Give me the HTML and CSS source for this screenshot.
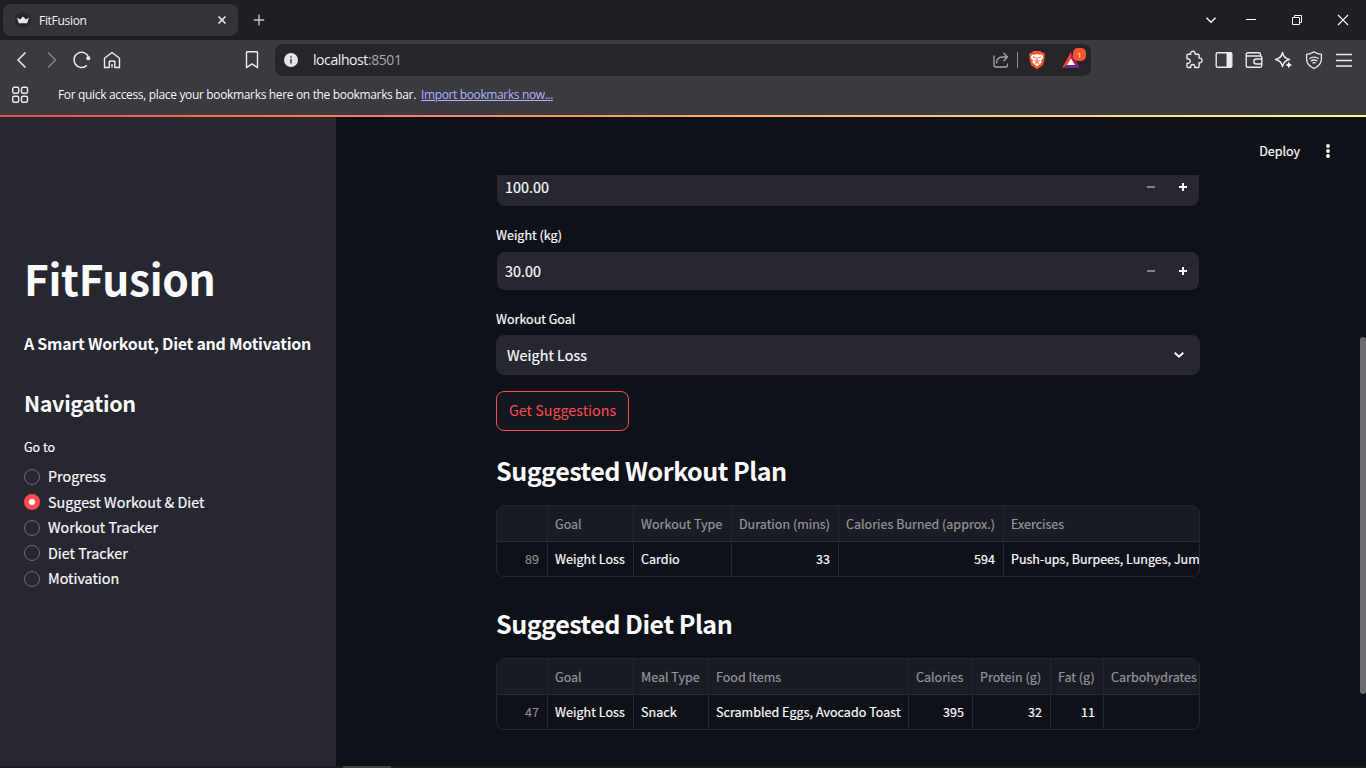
FILE: index.html
```html
<!DOCTYPE html>
<html lang="en">
<head>
<meta charset="utf-8">
<title>FitFusion</title>
<link rel="stylesheet" href="styles.css">
</head>
<body>
<div class="window">
  <div class="tabstrip">
    <div class="tab">
      <svg class="favicon" width="16" height="16" viewBox="0 0 16 16"><circle cx="8" cy="8" r="8" fill="#262730"/><path d="M2 5.500 5 7.400 8 4.500l3 2.900 3-1.900-1.800 5.700H3.800z" fill="#e8e8ea"/></svg>
      <span class="tab-title">FitFusion</span>
      <svg width="10" height="10" viewBox="0 0 10 10"><path d="M1.5 1.5l7 7m0-7l-7 7" stroke="#e4e4e6" stroke-width="1.7"/></svg>
    </div>
    <svg class="new-tab" width="12" height="12" viewBox="0 0 12 12"><path d="M6 .8v10.4M.8 6h10.4" stroke="#c4c4c8" stroke-width="1.4"/></svg>
    <div class="win-controls">
      <svg width="12" height="12" viewBox="0 0 12 12"><path d="M1.5 3.8 6 8.2l4.500-4.400" fill="none" stroke="#f0f0f2" stroke-width="1.6"/></svg>
      <svg width="12" height="12" viewBox="0 0 12 12"><path d="M1 5.500h10" stroke="#fff"/></svg>
      <svg width="12" height="12" viewBox="0 0 12 12"><path d="M1.500 3.500h7v7h-7zM3.500 3.500v-2h7v7h-2" fill="none" stroke="#fff"/></svg>
      <svg width="12" height="12" viewBox="0 0 12 12"><path d="M1 1l10 10M11 1 1 11" stroke="#fff" stroke-width="1.100"/></svg>
    </div>
  </div>

  <div class="toolbar">
    <div class="nav-icons">
      <svg width="20" height="20" viewBox="0 0 20 20"><path d="M13.500 2.500 6 10l7.500 7.500" fill="none" stroke="#ececee" stroke-width="1.500"/></svg>
      <svg width="20" height="20" viewBox="0 0 20 20"><path d="M6 2.500 13.500 10 6 17.500" fill="none" stroke="#828286" stroke-width="1.500"/></svg>
      <svg width="20" height="20" viewBox="0 0 20 20"><path d="M14.800 15.400A7.600 7.600 0 1 1 16.800 7.500" fill="none" stroke="#ececee" stroke-width="1.500"/><circle cx="16.300" cy="8.200" r="2" fill="#ececee"/></svg>
      <svg width="20" height="20" viewBox="0 0 20 20"><path d="M2.500 17.500V8.200L10 2.500l7.500 5.700v9.300h-4.700v-6.200H7.300v6.200zM10 17.500v-3.500" fill="none" stroke="#ececee" stroke-width="1.400" stroke-linejoin="round"/></svg>
    </div>
    <svg class="bookmark" width="20" height="20" viewBox="0 0 20 20"><path d="M4.500 2.500q0-.7.700-.7h9.600q.7 0 .7.700v15.200L10 13.900 4.500 17.700z" fill="none" stroke="#ececee" stroke-width="1.400" stroke-linejoin="round"/></svg>
    <div class="address">
      <svg width="14" height="14" viewBox="0 0 14 14"><circle cx="7" cy="7" r="7" fill="#e4e4e8"/><path d="M7 6v4.500M7 3.300v1.500" stroke="#3b3a40" stroke-width="1.500"/></svg>
      <span class="url">localhost<span class="port">:8501</span></span>
      <svg class="share" width="18" height="18" viewBox="0 0 18 18"><path d="M2 4.500V14q0 2 2 2h10q1.500 0 1.500-2v-1.500M4.500 12.500q0-6.500 6-6.500H15M11.500 2l4 4-4 4" fill="none" stroke="#a6a6aa" stroke-width="1.300"/></svg>
      <span class="divider"></span>
      <svg class="brave" width="18" height="20" viewBox="0 0 18 20"><path d="M5.500 1h7l1.700 1.700 1.800-.2 1 2.500-.6 2 .3 1.300-1.900 7L9 19.200l-5.800-3.900-1.900-7L1.600 7 1 5l1-2.500 1.800.2z" fill="#fb542b"/><path d="m4 4.400 2.200.3 2.800-.6 2.800.6 2.200-.3 1.400 3-2.400 3 .5 2.200L9 16.600l-4.500-4 .5-2.200-2.400-3z" fill="#fff"/><path d="m5 7 2.500.8m3 0L13 7M9 7v4m-2.500-.5L9 12l2.500-1.500M7 13.500l2-1 2 1" fill="none" stroke="#fb542b"/></svg>
      <div class="bat">
        <svg width="20" height="18" viewBox="0 0 20 18"><path d="M10 1 1 17l9-5.500z" fill="#ff4724"/><path d="M10 1l9 16-9-5.500z" fill="#9e1f63"/><path d="M1 17h18l-9-5.500z" fill="#662d91"/><path d="m10 7.500-4 6.500h8z" fill="#fff"/></svg>
        <span class="badge">1</span>
      </div>
    </div>
    <div class="tool-icons">
      <svg width="20" height="20" viewBox="0 0 20 20"><path d="M3 5.200q0-1 1-1h2.700a2.300 2.300 0 1 1 4.400 0h3q1 0 1 1v3a2.300 2.300 0 1 1 0 4.400v3.900q0 1-1 1h-3.500a2.100 2.100 0 1 0-3.800 0H4q-1 0-1-1v-3.300a2.300 2.300 0 1 0 0-4.200z" fill="none" stroke="#ececee" stroke-width="1.400" stroke-linejoin="round"/></svg>
      <svg width="20" height="20" viewBox="0 0 20 20"><rect x="2.200" y="2.700" width="15.600" height="14.600" rx="1.300" fill="none" stroke="#ececee" stroke-width="1.400"/><path d="M12.500 2.500h5v15h-5z" fill="#ececee"/></svg>
      <svg width="20" height="20" viewBox="0 0 20 20"><path d="M2.200 6V4.700q0-2 2-2h10.600q1.700 0 1.700 1.700V6M2.200 6h14q1.600 0 1.600 1.600v8q0 1.700-1.700 1.700H4q-1.800 0-1.800-1.800zM17.800 9h-5.500a2.500 2.500 0 0 0 0 5h5.500" fill="none" stroke="#ececee" stroke-width="1.400"/></svg>
      <svg width="20" height="20" viewBox="0 0 20 20"><path d="M8.500 2.500Q9.700 8.300 15.500 9.500 9.700 10.700 8.500 16.500 7.300 10.700 1.500 9.500 7.300 8.300 8.500 2.500z" fill="none" stroke="#ececee" stroke-width="1.400" stroke-linejoin="round"/><path d="M14.800 11.700q.5 2.700 3.400 3.300-2.900.6-3.400 3.300-.5-2.700-3.400-3.300 2.900-.6 3.400-3.300z" fill="#fff"/></svg>
      <svg width="20" height="20" viewBox="0 0 20 20"><path d="M10 1.800q3.300 2.400 7.400 2.600V9q0 6-7.400 9.500Q2.600 15 2.600 9V4.400Q6.700 4.200 10 1.800z" fill="none" stroke="#ececee" stroke-width="1.300" stroke-linejoin="round"/><path d="M5.300 8.700q4.700-3.100 9.400 0M6.800 11q3.200-2 6.400 0M8.500 13.100q1.500-.8 3 0" fill="none" stroke="#ececee" stroke-width="1.300"/></svg>
      <svg width="20" height="20" viewBox="0 0 20 20"><path d="M2 4.500h16M2 10.500h16M2 16h16" stroke="#ececee" stroke-width="1.400"/></svg>
    </div>
  </div>

  <div class="bookmarks">
    <svg width="18" height="18" viewBox="0 0 18 18"><g fill="none" stroke="#ececee" stroke-width="1.400"><rect x="1.700" y="1.200" width="6" height="6" rx="1.500"/><rect x="10.500" y="1.200" width="6" height="6" rx="1.500"/><rect x="1.700" y="10.200" width="6" height="6" rx="1.500"/><rect x="10.500" y="10.200" width="6" height="6" rx="1.500"/></g></svg>
    <span class="hint">For quick access, place your bookmarks here on the bookmarks bar.</span>
    <a class="import">Import bookmarks now...</a>
  </div>
  <div class="rainbow"></div>

  <div class="app">
    <aside class="sidebar">
      <h1>FitFusion</h1>
      <h4>A Smart Workout, Diet and Motivation</h4>
      <h3>Navigation</h3>
      <p class="radio-label">Go to</p>
      <ul class="radios">
        <li><i class="radio"></i><span>Progress</span></li>
        <li><i class="radio on"></i><span>Suggest Workout &amp; Diet</span></li>
        <li><i class="radio"></i><span>Workout Tracker</span></li>
        <li><i class="radio"></i><span>Diet Tracker</span></li>
        <li><i class="radio"></i><span>Motivation</span></li>
      </ul>
    </aside>
    <main class="main">
      <header class="app-header">
        <span class="deploy">Deploy</span>
        <svg width="6" height="16" viewBox="0 0 6 16"><g fill="#fafafa"><circle cx="3" cy="3" r="1.900"/><circle cx="3" cy="8" r="1.900"/><circle cx="3" cy="13" r="1.900"/></g></svg>
      </header>
      <div class="content">
        <div class="number cut"><span class="t16">100.00</span>
          <svg class="steps" width="42" height="10" viewBox="0 0 42 10"><path d="M1 5h8" stroke="#808495" stroke-width="2"/><path d="M33 5h8M37 1v8" stroke="#fafafa" stroke-width="2"/></svg></div>
        <label>Weight (kg)</label>
        <div class="number"><span class="t16">30.00</span>
          <svg class="steps" width="42" height="10" viewBox="0 0 42 10"><path d="M1 5h8" stroke="#808495" stroke-width="2"/><path d="M33 5h8M37 1v8" stroke="#fafafa" stroke-width="2"/></svg></div>
        <label>Workout Goal</label>
        <div class="select"><span class="t16">Weight Loss</span>
          <svg width="12" height="8" viewBox="0 0 12 8"><path d="m1.700 1.700 4.300 4 4.300-4" fill="none" stroke="#fafafa" stroke-width="2"/></svg></div>
        <button class="btn">Get Suggestions</button>
        <h2>Suggested Workout Plan</h2>
        <div class="table workout">
          <div class="cell head"></div><div class="cell head">Goal</div><div class="cell head">Workout Type</div><div class="cell head">Duration (mins)</div><div class="cell head">Calories Burned (approx.)</div><div class="cell head">Exercises</div>
          <div class="cell idx">89</div><div class="cell">Weight Loss</div><div class="cell">Cardio</div><div class="cell num">33</div><div class="cell num">594</div><div class="cell long">Push-ups, Burpees, Lunges, Jum</div>
        </div>
        <h2 class="second">Suggested Diet Plan</h2>
        <div class="table diet">
          <div class="cell head"></div><div class="cell head">Goal</div><div class="cell head">Meal Type</div><div class="cell head">Food Items</div><div class="cell head">Calories</div><div class="cell head">Protein (g)</div><div class="cell head">Fat (g)</div><div class="cell head">Carbohydrates</div>
          <div class="cell idx">47</div><div class="cell">Weight Loss</div><div class="cell">Snack</div><div class="cell">Scrambled Eggs, Avocado Toast</div><div class="cell num">395</div><div class="cell num">32</div><div class="cell num">11</div><div class="cell"></div>
        </div>
      </div>
      <div class="scroll-thumb"></div>
    </main>
  </div>
  <div class="bottom-strip"><div class="bottom-thumb"></div></div>
</div>
</body>
</html>
```
FILE: styles.css
```css
* { box-sizing: border-box; margin: 0; padding: 0; }
body { width: 1366px; height: 768px; overflow: hidden; background: #0e1117; color: #fafafa; }
svg { display: block; flex: none; }
.window { width: 1366px; height: 768px; display: flex; flex-direction: column; font-family: "Noto Sans CJK JP", "Noto Sans", sans-serif; }

.tabstrip, .toolbar, .bookmarks { font-family: "Open Sans", "Noto Sans", sans-serif; display: flex; align-items: center; flex: none; }
.tabstrip { height: 40px; background: #1f1e23; padding-left: 3px; }
.tab { width: 235px; height: 32px; border-radius: 8px; background: #343338; display: flex; align-items: center; padding: 0 11px 0 12px; }
.tab-title { flex: 1; margin-left: 8px; font-size: 12px; letter-spacing: -.3px; color: #f4f4f5; }
.new-tab { margin-left: 15px; }
.win-controls { margin-left: auto; display: flex; padding-right: 17px; gap: 34px; }
.win-controls svg:first-child { margin-right: -6px; }

.toolbar { height: 40px; background: #3b3a3f; padding-left: 12px; }
.nav-icons, .tool-icons { display: flex; gap: 10px; }
.bookmark { margin-left: 120px; }
.address { margin-left: 13px; width: 816px; height: 32px; border-radius: 8px; background: #26252a; display: flex; align-items: center; padding: 0 9px; }
.url { margin-left: 15px; padding-bottom: 1px; font-size: 14px; letter-spacing: -.42px; color: #f2f2f4; }
.port { color: #a8a8ac; }
.share { margin-left: auto; }
.divider { width: 1px; height: 16px; background: #8d8d92; margin: 0 10px 0 7px; }
.bat { position: relative; margin-left: 15px; margin-right: 1px; }
.badge { position: absolute; left: 12px; top: -3px; width: 13px; height: 13px; border-radius: 5px; background: #fb542b; color: #fff; font-size: 8px; line-height: 13px; text-align: center; }
.tool-icons { margin-left: 93px; }

.bookmarks { height: 35px; background: #3b3a3f; padding: 0 0 5px 11px; }
.hint, .import { padding-bottom: 1px; font-size: 12px; letter-spacing: -.34px; color: #f6f6f8; }
.hint { margin-left: 29px; }
.import { margin-left: 5px; letter-spacing: -.37px; color: #b0b0ff; text-decoration: underline; }
.rainbow { height: 2px; flex: none; background: linear-gradient(90deg, #ff4b4b, #fffd80); }

.app { flex: 1; display: flex; min-height: 0; -webkit-text-stroke: .2px; }
.sidebar { width: 336px; background: #262730; padding: 134px 24px 0; white-space: nowrap; }
h1, h2, h3, h4 { font-weight: 700; -webkit-text-stroke: 0; }
h1 { font-size: 42.500px; line-height: 53px; letter-spacing: -.35px; }
h4 { font-size: 16px; line-height: 24px; margin-top: 27px; letter-spacing: -.27px; }
h3 { font-size: 21.500px; line-height: 30px; margin-top: 33px; letter-spacing: -.35px; }
.radio-label { font-size: 12.500px; line-height: 20px; margin-top: 19px; }
.radios { list-style: none; margin-top: 7px; }
.radios li { display: flex; align-items: center; height: 25.500px; font-size: 14.330px; }
.radios span { padding-bottom: 2px; }
.radio { width: 16px; height: 16px; border-radius: 50%; border: 1px solid #6c6d75; margin-right: 8px; }
.radio.on { border: 5px solid #ff4b4b; background: #fafafa; }

.main { flex: 1; position: relative; background: #0e1117; }
.app-header { height: 58px; display: flex; justify-content: flex-end; align-items: center; padding: 10px 35px 0 0; gap: 25px; }
.deploy { font-size: 12.500px; padding-bottom: 2px; }
.content { width: 704px; margin-left: 160px; white-space: nowrap; }
.t16 { font-size: 14.330px; line-height: 24px; letter-spacing: .03px; }
.number { height: 38px; margin: 0 1px; border-radius: 8px; background: #262730; display: flex; align-items: center; padding: 0 11px 0 8px; justify-content: space-between; }
.number.cut { height: 31px; border-radius: 0 0 8px 8px; padding-bottom: 7px; }
label { display: block; font-size: 12.500px; line-height: 20px; margin: 19px 0 7px; }
.number + label { margin-bottom: 6px; }
.number.cut + label { margin-bottom: 7px; }
.select { height: 40px; border-radius: 8px; background: #262730; display: flex; align-items: center; justify-content: space-between; padding: 0 15px 0 11px; }
.btn { display: block; width: 133px; height: 40px; margin-top: 16px; padding-bottom: 2px; border: 1px solid #ff4b4b; border-radius: 8px; background: #131720; color: #ff4b4b; font: 14.330px/24px "Noto Sans CJK JP", sans-serif; -webkit-text-stroke: 0; white-space: nowrap; }
h2 { font-size: 25.100px; line-height: 34px; margin-top: 22px; letter-spacing: -.5px; }
h2.second { margin-top: 29px; }
.table { margin-top: 18px; height: 72px; border: 1px solid #25272d; border-radius: 8px; overflow: hidden; display: grid; grid-template-rows: 36px 34px; }
.workout { grid-template-columns: 51px 86px 98px 107px 165px 1fr; }
.diet { grid-template-columns: 51px 86px 75px 200px 64px 78px 53px 1fr; }
.cell { min-width: 0; overflow: hidden; padding: 0 7px; border-right: 1px solid #25272d; font-size: 12.500px; line-height: 34px; letter-spacing: .04px; }
.cell.head { background: #1a1c23; color: #95969a; line-height: 36px; border-bottom: 1px solid #2b2d33; letter-spacing: .02px; }
.cell.long { letter-spacing: 0; }
.workout .cell:nth-child(6n), .diet .cell:nth-child(8n) { border-right: 0; padding-right: 0; }
.cell.num, .cell.idx { text-align: right; padding-right: 8px; }
.idx { color: #8b8c90; }
.scroll-thumb { position: absolute; right: 0; top: 220px; width: 6px; height: 357px; border-radius: 3px; background: #6b6c70; }
.bottom-strip { height: 2px; flex: none; background: #1c1c1e; }
.bottom-thumb { width: 48px; height: 2px; margin-left: 343px; background: #454547; }
```
